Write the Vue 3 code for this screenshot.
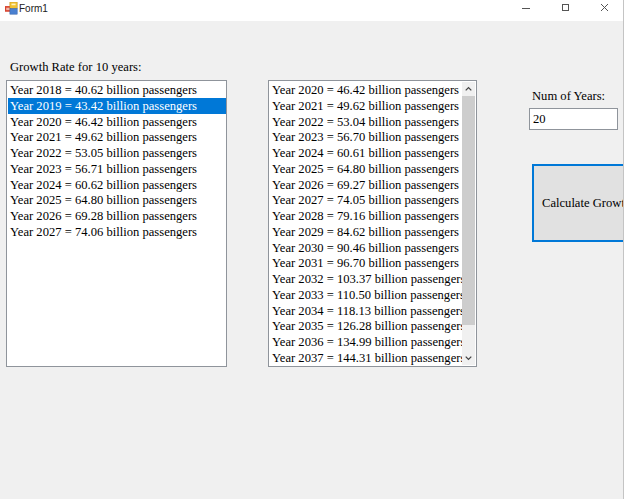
<script setup>
const growth10 = [
  ['2018', '40.62'], ['2019', '43.42'], ['2020', '46.42'], ['2021', '49.62'], ['2022', '53.05'],
  ['2023', '56.71'], ['2024', '60.62'], ['2025', '64.80'], ['2026', '69.28'], ['2027', '74.06'],
]
const growth20 = [
  ['2020', '46.42'], ['2021', '49.62'], ['2022', '53.04'], ['2023', '56.70'], ['2024', '60.61'],
  ['2025', '64.80'], ['2026', '69.27'], ['2027', '74.05'], ['2028', '79.16'], ['2029', '84.62'],
  ['2030', '90.46'], ['2031', '96.70'], ['2032', '103.37'], ['2033', '110.50'], ['2034', '118.13'],
  ['2035', '126.28'], ['2036', '134.99'], ['2037', '144.31'],
]
const selectedYear = '2019'
</script>

<template>
  <div class="window">
    <header class="titlebar">
      <svg class="app-icon" viewBox="0 0 16 16" width="13" height="13">
        <rect x="0" y="5" width="7" height="7" fill="#d8432f" />
        <rect x="6" y="0" width="9" height="8" fill="#f2c230" stroke="#b98a1a" stroke-width="0.6" />
        <rect x="6" y="8" width="9" height="7" fill="#4a80d0" stroke="#2f5ea5" stroke-width="0.6" />
        <rect x="1.5" y="7" width="4" height="3" fill="#f3b5a6" />
        <rect x="8" y="2" width="5" height="2" fill="#fff3c0" />
      </svg>
      <span class="title">Form1</span>
      <div class="win-buttons">
        <svg viewBox="0 0 10 10" width="10" height="10"><path d="M0 5.5H8" stroke="#555" fill="none" /></svg>
        <svg viewBox="0 0 10 10" width="10" height="10"><rect x="1.5" y="1.5" width="6" height="6" stroke="#555" fill="none" /></svg>
        <svg viewBox="0 0 10 10" width="10" height="10"><path d="M1 1L8 8M8 1L1 8" stroke="#555" fill="none" /></svg>
      </div>
    </header>

    <main class="form">
      <section class="col-first">
        <label class="caption">Growth Rate for 10 years:</label>
        <ul class="listbox first-list">
          <li v-for="row in growth10" :key="row[0]" :class="{ selected: row[0] === selectedYear }">
            Year {{ row[0] }} = {{ row[1] }} billion passengers
          </li>
        </ul>
      </section>

      <section class="listbox second-list">
        <ul class="rows">
          <li v-for="row in growth20" :key="row[0]">Year {{ row[0] }} = {{ row[1] }} billion passengers</li>
        </ul>
        <div class="scrollbar">
          <svg viewBox="0 0 14 14" width="13" height="14"><path d="M4 8.5L7 5.5L10 8.5" stroke="#444" stroke-width="1.4" fill="none" /></svg>
          <div class="track"><div class="thumb"></div></div>
          <svg viewBox="0 0 14 14" width="13" height="14"><path d="M4 5.5L7 8.5L10 5.5" stroke="#444" stroke-width="1.4" fill="none" /></svg>
        </div>
      </section>

      <section class="col-last">
        <label class="caption years-label">Num of Years:</label>
        <input class="years-input" value="20" />
        <button class="calc-btn">Calculate Growth Rate</button>
      </section>
    </main>
  </div>
</template>

<style>
html, body { margin: 0; background: #f0f0f0; }
</style>

<style scoped>
.window {
  box-sizing: border-box;
  width: 624px;
  height: 499px;
  overflow: hidden;
  background: #f0f0f0;
  border-right: 1px solid #c4c4c4;
  font-family: 'Liberation Serif', serif;
  font-size: 12.6px;
  color: #000;
}

.titlebar {
  height: 21px;
  background: #fff;
  display: flex;
  align-items: flex-start;
  padding-left: 5px;
}

.app-icon { margin: 2px 1px 0 0; }

.title {
  font-family: 'Liberation Sans', sans-serif;
  font-size: 10px;
  line-height: 18px;
  color: #222;
}

.win-buttons {
  margin-left: auto;
  display: flex;
  gap: 29px;
  padding: 3px 13px 0 0;
}

.form {
  display: flex;
  align-items: flex-start;
  padding-left: 6px;
}

.col-first {
  padding-top: 38px;
  width: 221px;
}

.caption {
  display: block;
  height: 21px;
  line-height: 17px;
  padding-left: 4px;
}

.listbox {
  box-sizing: border-box;
  margin: 0;
  padding: 1px;
  background: #fff;
  border: 1px solid #8f949b;
  list-style: none;
}

.first-list { height: 287px; width: 221px; padding-right: 0; }

li {
  height: 15.75px;
  line-height: 17px;
  padding-left: 2px;
  white-space: nowrap;
  overflow: hidden;
}

li.selected {
  background: #0078d7;
  color: #fff;
}

.second-list {
  display: flex;
  width: 209px;
  height: 287px;
  margin-top: 59px;
  margin-left: 41px;
}

.rows {
  flex: 1;
  min-width: 0;
  margin: 0;
  padding: 0;
  list-style: none;
}

.scrollbar {
  width: 13px;
  display: flex;
  flex-direction: column;
  background: #f0f0f0;
}

.track {
  flex: 1;
  min-height: 0;
}

.thumb {
  height: 229px;
  background: #cdcdcd;
}

.col-last {
  display: flex;
  flex-direction: column;
  margin-left: 52px;
  padding-top: 67px;
  flex: none;
  width: 120px;
}

.years-label { padding-left: 3px; height: 13px; line-height: 17px; margin-bottom: 7px; }

.years-input {
  box-sizing: border-box;
  width: 89px;
  height: 22px;
  padding: 0 3px;
  border: 1px solid #8f949b;
  background: #fff;
  font-family: inherit;
  font-size: 12.6px;
  color: #000;
  outline: none;
}

.calc-btn {
  box-sizing: border-box;
  width: 140px;
  height: 78px;
  margin-top: 34px;
  margin-left: 3px;
  padding: 0 0 0 8px;
  border: 2px solid #0078d7;
  background: #e1e1e1;
  font-family: inherit;
  font-size: 12.6px;
  color: #000;
  text-align: left;
  white-space: nowrap;
  overflow: hidden;
}
</style>
